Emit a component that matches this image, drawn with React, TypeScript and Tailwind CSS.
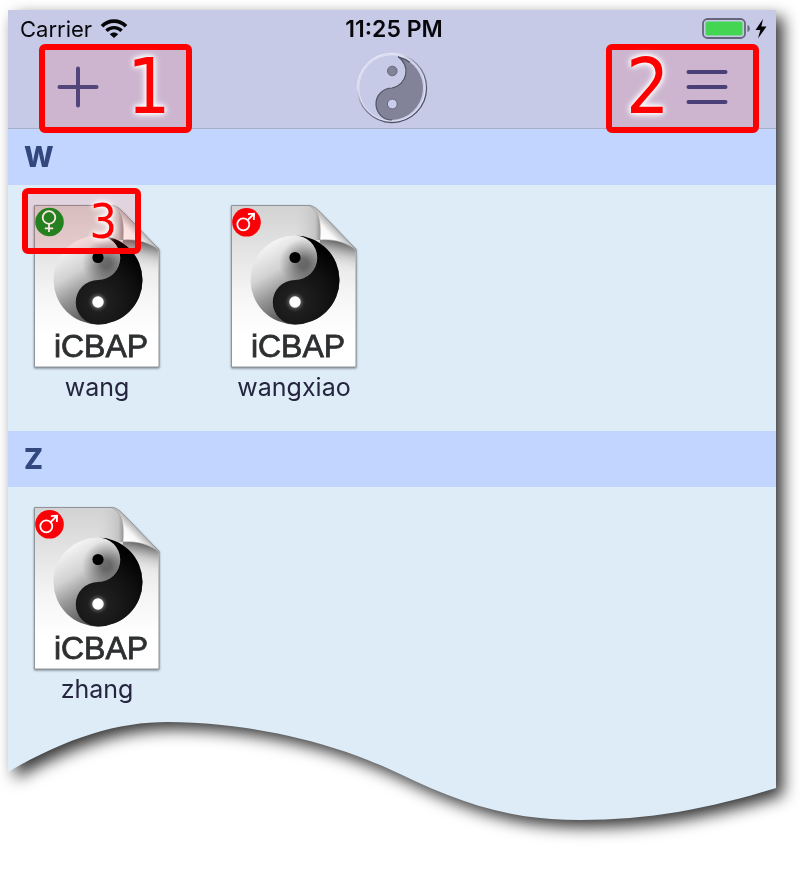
import React from 'react';

const sections = [
  {
    letter: 'W',
    files: [
      { name: 'wang', gender: 'female', callout: '3' },
      { name: 'wangxiao', gender: 'male', callout: '' },
    ],
  },
  {
    letter: 'Z',
    files: [{ name: 'zhang', gender: 'male', callout: '' }],
  },
];

function WifiIcon() {
  return (
    <svg width="28" height="20" viewBox="0 0 28 20" fill="none" aria-hidden="true">
      <path d="M2 7.2C8.5 .4 19.5 .4 26 7.2" stroke="#050507" strokeWidth="3.6" />
      <path d="M6.4 11.8C10.6 7.6 17.4 7.6 21.6 11.8" stroke="#050507" strokeWidth="3.4" />
      <path d="M14 19L9.8 15.2C12 13 16 13 18.2 15.2Z" fill="#050507" />
    </svg>
  );
}

function BatteryIcon() {
  return (
    <svg width="66" height="22" viewBox="0 0 66 22" aria-hidden="true">
      <rect x="1" y="1" width="42" height="19" rx="4.5" fill="none" stroke="#66667a" strokeWidth="1.8" />
      <rect x="3.5" y="3.5" width="37" height="14" rx="2" fill="#44d553" />
      <path d="M45.5 7C48.6 8 48.6 13 45.5 14Z" fill="#66667a" />
      <path d="M61 1L53.5 12H58.3L56 20.5L64.5 8.6H59.4Z" fill="#050507" />
    </svg>
  );
}

function Emblem() {
  return (
    <svg width="72" height="72" viewBox="0 0 72 72" fill="none" aria-hidden="true">
      <defs>
        <linearGradient id="emblemRim" x1="15" y1="10" x2="50" y2="55" gradientUnits="userSpaceOnUse">
          <stop offset="0.2" stopColor="#e4e7f6" />
          <stop offset="0.5" stopColor="#8b8da6" />
          <stop offset="1" stopColor="#4c4e60" />
        </linearGradient>
      </defs>
      <circle cx="36" cy="36" r="34.5" stroke="url(#emblemRim)" strokeWidth="1.3" />
      <circle cx="36" cy="36" r="33.2" stroke="#dfe2f4" strokeWidth="1" />
      <path
        d="M42 4.8A32 32 0 0 1 36 68A16 16 0 0 1 36 36A17 17 0 0 0 42 4.8Z"
        fill="#828399"
      />
      <path d="M36 68A16 16 0 0 1 36 36A17 17 0 0 0 42 4.8C47 6 51 8.3 54 10.6" stroke="#505265" strokeWidth="1.2" />
      <circle cx="36.3" cy="19" r="4.8" fill="#828399" stroke="#666880" strokeWidth="1" />
      <circle cx="36.3" cy="52" r="4.9" fill="#cbceea" stroke="#666880" strokeWidth="1" />
    </svg>
  );
}

function GenderBadge({ gender }: { gender: string }) {
  if (gender === 'female') {
    return (
      <g fill="none" stroke="#fff" strokeWidth="1.8">
        <circle cx="17.5" cy="19" r="14.3" fill="#0c8f22" stroke="none" />
        <circle cx="17" cy="14.5" r="6.3" />
        <path d="M17 21V29M12.8 25.3H21.2" />
      </g>
    );
  }
  return (
    <g fill="none" stroke="#fff" strokeWidth="1.8">
      <circle cx="17.5" cy="19.3" r="14.3" fill="#fb0007" stroke="none" />
      <circle cx="14.3" cy="21.3" r="6" />
      <path d="M18.7 17L25 10.9M18.9 11.2L25.1 10.7L24.8 17" />
    </g>
  );
}

function FileIcon({ id, gender }: { id: string; gender: string }) {
  return (
    <svg width="130" height="168" viewBox="0 0 130 168" aria-hidden="true">
      <defs>
        <linearGradient id={`${id}-paper`} x1="0" y1="0" x2="0" y2="1">
          <stop offset="0" stopColor="#d2d2d2" />
          <stop offset="0.55" stopColor="#f5f5f5" />
          <stop offset="0.8" stopColor="#fff" />
        </linearGradient>
        <linearGradient id={`${id}-fold`} x1="93" y1="37" x2="107" y2="23" gradientUnits="userSpaceOnUse">
          <stop offset="0" stopColor="#fff" />
          <stop offset="0.5" stopColor="#f8f8f8" />
          <stop offset="1" stopColor="#a9a9a9" />
        </linearGradient>
        <linearGradient id={`${id}-under`} x1="107" y1="38" x2="101" y2="66" gradientUnits="userSpaceOnUse">
          <stop offset="0" stopColor="#666" />
          <stop offset="0.45" stopColor="#bbb" stopOpacity="0.7" />
          <stop offset="1" stopColor="#eee" stopOpacity="0" />
        </linearGradient>
        <linearGradient id={`${id}-side`} x1="92" y1="0" x2="64" y2="0" gradientUnits="userSpaceOnUse">
          <stop offset="0" stopColor="#8f8f8f" />
          <stop offset="0.2" stopColor="#c4c4c4" />
          <stop offset="1" stopColor="#d6d6d6" stopOpacity="0" />
        </linearGradient>
        <linearGradient id={`${id}-yang`} x1="38" y1="42" x2="76" y2="106" gradientUnits="userSpaceOnUse">
          <stop offset="0" stopColor="#f4f4f4" />
          <stop offset="0.35" stopColor="#d2d2d2" />
          <stop offset="0.6" stopColor="#9b9b9b" />
          <stop offset="1" stopColor="#555" />
        </linearGradient>
        <radialGradient id={`${id}-dark`}>
          <stop offset="0.2" stopColor="#333" stopOpacity="0.6" />
          <stop offset="1" stopColor="#555" stopOpacity="0" />
        </radialGradient>
        <radialGradient id={`${id}-glow`}>
          <stop offset="0.4" stopColor="#777" />
          <stop offset="1" stopColor="#222" stopOpacity="0" />
        </radialGradient>
        <radialGradient id={`${id}-yin`} cx="66" cy="99" r="60" gradientUnits="userSpaceOnUse">
          <stop offset="0" stopColor="#242424" />
          <stop offset="0.6" stopColor="#111" />
          <stop offset="1" stopColor="#000" />
        </radialGradient>
        <clipPath id={`${id}-head`}>
          <path d="M66 32.5A44.5 44.5 0 0 0 66 121.5A22.25 22.25 0 0 1 66 77A22.25 22.25 0 0 0 66 32.5Z" />
        </clipPath>
      </defs>
      <path
        d="M2.500 2.500H80C88 3 94 13 127 46V164H2.500Z"
        fill={`url(#${id}-paper)`}
        stroke="#8e969c"
        strokeWidth="1"
        className="drop-shadow-[0_1px_1px_rgba(0,0,0,0.45)]"
      />
      <path d="M64 3H80C90 7 93 20 91 37H64Z" fill={`url(#${id}-side)`} />
      <path d="M91 37C103 36 118 39 126.500 47V80L88 66Z" fill={`url(#${id}-under)`} />
      <path
        d="M80 2.5C88 3 94 13 127 47C117 39 104 36 91 37C92 20 91 9 80 2.5Z"
        fill={`url(#${id}-fold)`}
        stroke="#999"
        strokeWidth="0.6"
      />
      <circle cx="66" cy="77" r="44.5" fill={`url(#${id}-yang)`} />
      <circle cx="74" cy="60" r="24" fill={`url(#${id}-dark)`} clipPath={`url(#${id}-head)`} />
      <path
        d="M66 32.5A44.5 44.5 0 0 1 66 121.5A22.25 22.25 0 0 1 66 77A22.25 22.25 0 0 0 66 32.5Z"
        fill={`url(#${id}-yin)`}
      />
      <circle cx="66" cy="54.5" r="5.6" fill="#000" />
      <circle cx="66" cy="99" r="11" fill={`url(#${id}-glow)`} />
      <circle cx="66" cy="99" r="5.7" fill="#fff" />
      <text
        x="69"
        y="154"
        textAnchor="middle"
        fill="#2d2f30"
        stroke="#2d2f30"
        strokeWidth="0.8"
        className="font-['Liberation_Sans',sans-serif] text-[32px]"
      >
        iCBAP
      </text>
      <GenderBadge gender={gender} />
    </svg>
  );
}

const digit =
  "font-['DejaVu_Sans_Condensed','DejaVu_Sans',sans-serif] text-[#ff0000] [text-shadow:0_0_4px_#fff,0_0_6px_#fff,0_0_8px_#fff]";

export default function App() {
  return (
    <div className="bg-white pt-[10px] pr-6 pb-[54px] pl-2 font-['Inter',sans-serif]">
      <div className="drop-shadow-[7px_7px_8px_rgba(0,0,0,0.8)]">
        <header className="border-b border-[#a8afcb] bg-[#c7cae6]">
          <div className="grid h-[34px] grid-cols-[1fr_auto_1fr] items-center pt-1 pr-2 pl-3 text-[22px] leading-6 text-[#08080c]">
            <div className="flex items-center gap-2">
              <span>Carrier</span>
              <WifiIcon />
            </div>
            <span className="text-[23px] font-semibold">11:25 PM</span>
            <div className="flex justify-end">
              <BatteryIcon />
            </div>
          </div>
          <nav className="grid h-[84px] grid-cols-[1fr_auto_1fr] items-start px-[17px]">
            <div className="relative z-10 ml-[14px] flex h-[89px] w-[153px] items-center gap-7 rounded-md border-6 border-[#ff0000] bg-[#ff0000]/10 pb-[3px] pl-3">
              <button type="button" aria-label="Add">
                <svg width="42" height="42" viewBox="0 0 42 42" stroke="#51457a" strokeWidth="4" strokeLinecap="round">
                  <path d="M21 2.5V39.5M2.5 21H39.5" />
                </svg>
              </button>
              <span className={`${digit} text-[76px] leading-none`}>1</span>
            </div>
            <div className="pt-2">
              <Emblem />
            </div>
            <div className="relative z-10 flex h-[89px] w-[153px] items-center gap-4 justify-self-end rounded-md border-6 border-[#ff0000] bg-[#ff0000]/10 pb-[3px] pl-[14px]">
              <span className={`${digit} text-[76px] leading-none`}>2</span>
              <button type="button" aria-label="Menu">
                <svg width="42" height="42" viewBox="0 0 42 42" stroke="#4b3f77" strokeWidth="4" strokeLinecap="round">
                  <path d="M2.5 6H39.5M2.5 21H39.5M2.5 36H39.5" />
                </svg>
              </button>
            </div>
          </nav>
        </header>

        <main>
          {sections.map((section) => (
            <section key={section.letter} className="bg-[#deecf8] pb-7 last:pb-[17px]">
              <h2 className="bg-[#c2d5ff] px-4 py-3 text-[28px] leading-8 font-extrabold text-[#33477f]">
                {section.letter}
              </h2>
              <div className="flex flex-wrap gap-[67px] px-6 pt-[18px]">
                {section.files.map((file) => (
                  <div key={file.name} className="relative">
                    <button type="button" className="flex w-[130px] flex-col items-center">
                      <FileIcon id={file.name} gender={file.gender} />
                      <span className="text-[25px] leading-8 text-[#26253f]">{file.name}</span>
                    </button>
                    {file.callout && (
                      <div className="pointer-events-none absolute -top-[15px] -left-[10px] flex h-[66px] w-[119px] items-center justify-end rounded-md border-6 border-[#ff0000] bg-[#ff0000]/10 pr-[18px]">
                        <span className={`${digit} text-[48px] leading-none`}>{file.callout}</span>
                      </div>
                    )}
                  </div>
                ))}
              </div>
            </section>
          ))}
        </main>

        <svg
          viewBox="0 0 768 98"
          preserveAspectRatio="none"
          className="block h-[98px] w-full"
          aria-hidden="true"
        >
          <path
            d="M0 0V50C60 15 110 0 160 0C230 0 318 16 392 52C450 80 500 98 572 98C640 98 700 87 768 66V0Z"
            fill="#deecf8"
          />
        </svg>
      </div>
    </div>
  );
}
